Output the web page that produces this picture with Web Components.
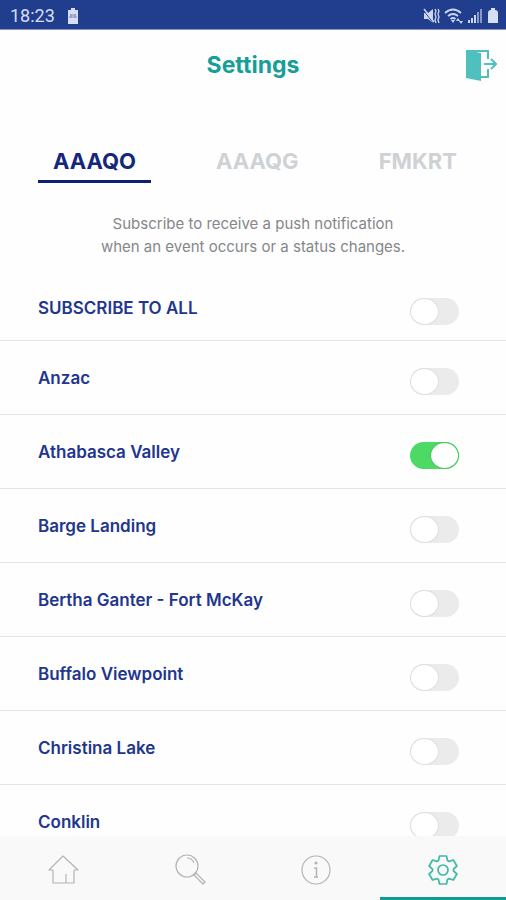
<!DOCTYPE html>
<html lang="en">
<head>
<meta charset="utf-8">
<meta name="viewport" content="width=device-width, initial-scale=1">
<title>Settings</title>
<style>
	body {
		margin: 0;
		background: #fefefe;
		font-family: Inter, "Liberation Sans", sans-serif;
	}
</style>
</head>
<body>
<settings-screen></settings-screen>

<script>
const statusTemplate = /*html*/`
<span class="side">
	<time>18:23</time>
	<svg width="12" height="18" viewBox="0 0 12 18" aria-hidden="true">
		<path d="M4 1h4v2h3v14H1V3h3z" fill="#d5def5"/>
		<path d="M3 8h6M2 10h8M4 7v4M8 7v4" stroke="#7f8dbd"/>
	</svg>
</span>
<span class="side icons">
	<svg width="17" height="18" viewBox="0 0 17 18" aria-hidden="true">
		<path d="M1 6h4l5-4v14l-5-4H1z" fill="#ccd6f0"/>
		<path d="M1 4l10 13" stroke="#213e8e"/>
		<path d="M1 2l10 13" stroke="#ccd6f0" stroke-width="1.5"/>
		<path d="M12 2l1 2-1 3 1 3-1 3 1 3M15 2l1 2-1 3 1 3-1 3 1 3" fill="none" stroke="#ccd6f0" stroke-width="1.3"/>
	</svg>
	<svg width="20" height="18" viewBox="0 0 20 18" aria-hidden="true">
		<path d="M1 6q8-7 16 0M4 9q5-4 10 0M6.5 12q2.5-2 5 0" fill="none" stroke="#ccd6f0" stroke-width="1.8"/>
		<path d="M7 13h4l-2 3zM12 14l2-3 2 3zM15 14h4l-2 3z" fill="#ccd6f0"/>
	</svg>
	<svg width="15" height="18" viewBox="0 0 15 18" aria-hidden="true">
		<path d="M0 13h2v3H0zM3 11h2v5H3zM6 8h2v8H6z" fill="#ccd6f0"/>
		<path d="M9 5h2v11H9zM12 2h2v14h-2z" fill="#8998c8"/>
	</svg>
	<svg width="12" height="18" viewBox="0 0 12 18" aria-hidden="true">
		<path d="M4 1h4v2q3 0 3 3v10H1V6q0-3 3-3z" fill="#d5def5"/>
	</svg>
</span>

<style>
	:host {
		display: flex;
		flex: none;
		justify-content: space-between;
		align-items: center;
		box-sizing: border-box;
		height: 30px;
		padding: 2px 7px 0 10px;
		background: #213e8e;
		border-bottom: 1px solid #8794c0;
		color: #d5def5;
	}

	.side {
		display: flex;
		align-items: center;
		gap: 12px;
	}

	.icons {
		gap: 4px;
	}

	time {
		font: 18px/20px Roboto, sans-serif;
	}

	svg {
		display: block;
	}
</style>
`;

class StatusBar extends HTMLElement {
	constructor() {
		super();
		this.attachShadow({ mode: "open" }).innerHTML = statusTemplate;
	}
}

const headerTemplate = /*html*/`
<h1><slot></slot></h1>
<button title="Log out" aria-label="Log out">
	<svg width="32" height="32" viewBox="0 0 32 32" aria-hidden="true">
		<path d="M1 1l15 3v28L1 29z" fill="#4fc0be"/>
		<path d="M1 2h22v8M23 20v8h-7" fill="none" stroke="#4fc0be" stroke-width="2"/>
		<path d="M19 15h11M26 10l5 5-5 5" fill="none" stroke="#4fc0be" stroke-width="2"/>
	</svg>
</button>

<style>
	:host {
		display: grid;
		flex: none;
		grid-template-columns: 1fr auto 1fr;
		align-items: center;
		height: 69px;
		padding: 0 9px;
	}

	h1 {
		grid-column: 2;
		margin: 0;
		font-size: 23px;
		line-height: 28px;
		font-weight: 700;
		color: #159f96;
	}

	button {
		justify-self: end;
		border: none;
		padding: 0;
		background: transparent;
	}

	svg {
		display: block;
	}
</style>
`;

class ScreenHeader extends HTMLElement {
	constructor() {
		super();
		this.attachShadow({ mode: "open" }).innerHTML = headerTemplate;
	}
}

const tabsStyle = /*html*/`
<style>
	:host {
		display: flex;
		flex: none;
		justify-content: space-between;
		margin-top: 43px;
		padding: 0 34px 0 38px;
	}

	button {
		border: none;
		border-bottom: 3px solid transparent;
		padding: 5px 15px;
		background: transparent;
		font: 700 22px/28px Inter, sans-serif;
		color: #cfd2d5;
	}

	button[aria-selected="true"] {
		border-color: #101f74;
		color: #14277c;
	}
</style>
`;

class TabBar extends HTMLElement {
	#shadow;
	constructor() {
		super();
		this.#shadow = this.attachShadow({ mode: "open" });
	}

	connectedCallback() {
		this.setAttribute('role', 'tablist');
		const names = this.getAttribute('tabs').split(' ');
		this.#shadow.innerHTML = tabsStyle + names.map((name, i) =>
			`<button role="tab" aria-selected="${i === 0}">${name}</button>`).join('');
		this.#shadow.addEventListener('click', (e) => this.#select(e.target.closest('button')));
	}

	#select(button) {
		if(!button)
			return;

		this.#shadow.querySelectorAll('button').forEach((b) => b.setAttribute('aria-selected', b === button));
	}
}

const rowTemplate = /*html*/`
<label for="toggle"><slot></slot></label>
<input id="toggle" type="checkbox" role="switch">

<style>
	:host {
		display: flex;
		justify-content: space-between;
		align-items: center;
		box-sizing: border-box;
		height: 74px;
		padding: 0 47px 0 38px;
		border-bottom: 1px solid #e3e4e6;
	}

	:host([compact]) {
		height: 66px;
	}

	label {
		font-size: 17px;
		line-height: 24px;
		font-weight: 600;
		color: #21368c;
	}

	input {
		appearance: none;
		display: flex;
		flex: none;
		align-items: center;
		box-sizing: border-box;
		width: 49px;
		height: 27px;
		margin: 8px 0 0;
		padding: 0 1px;
		border-radius: 14px;
		background: #ebebec;
	}

	input::before {
		content: "";
		width: 27px;
		height: 25px;
		border-radius: 50%;
		background: #fff;
		box-shadow: 0 0 0 1px #dededf;
	}

	input:checked {
		justify-content: flex-end;
		background: #4cd964;
	}

	input:checked::before {
		box-shadow: 0 0 0 1px #43c95a;
	}
</style>
`;

class SwitchRow extends HTMLElement {
	constructor() {
		super();
		this.attachShadow({ mode: "open" }).innerHTML = rowTemplate;
	}

	connectedCallback() {
		this.shadowRoot.querySelector('input').checked = this.hasAttribute('on');
	}
}

const navTemplate = /*html*/`
<a href="#home" aria-label="Home">
	<svg width="32" height="32" viewBox="0 0 32 32">
		<path d="M6 16v13h21V16M6 16H2L16 2l15 14h-4M19 29v-9"/>
	</svg>
</a>
<a href="#search" aria-label="Search">
	<svg width="32" height="32" viewBox="0 0 32 32">
		<circle cx="13" cy="12" r="11"/>
		<path d="M13 4q5 0 7 5M20 21l2-2 9 9-2 2zM20 20l1-1"/>
	</svg>
</a>
<a href="#info" aria-label="Information">
	<svg width="32" height="32" viewBox="0 0 32 32">
		<circle cx="16" cy="16" r="14"/>
		<circle cx="16" cy="9" r="1" fill="#a0a0a0"/>
		<path d="M14 14h2.5v9M14 23h4" stroke-width="1.5"/>
	</svg>
</a>
<a href="#settings" aria-label="Settings" aria-current="page">
	<svg width="32" height="32" viewBox="0 0 32 32">
		<path d="M12.5 2h7l1 4.500L22 7.400 26.400 6l3.500 6-3.400 3.100v1.800l3.400 3.100-3.500 6-4.400-1.400-1.500.9-1 4.500h-7l-1-4.500-1.500-.9L5.600 26l-3.500-6 3.400-3.100v-1.800L2.100 12l3.500-6L10 7.400l1.500-.9z"/>
		<circle cx="16" cy="16" r="5"/>
	</svg>
</a>

<style>
	:host {
		display: grid;
		flex: none;
		grid-template-columns: repeat(4, 1fr);
		height: 64px;
		background: #f9f9f9;
	}

	a {
		display: flex;
		align-items: center;
		justify-content: center;
		border-bottom: 3px solid transparent;
		padding-top: 6px;
		color: #b4b4b4;
	}

	a[aria-current] {
		border-color: #119b91;
		color: #3fb9a9;
	}

	svg {
		fill: none;
		stroke: currentColor;
		stroke-width: 1.2;
		stroke-linejoin: round;
	}

	a[aria-current] svg {
		stroke-width: 1.7;
	}
</style>
`;

class BottomNav extends HTMLElement {
	constructor() {
		super();
		this.attachShadow({ mode: "open" }).innerHTML = navTemplate;
	}
}

const screenTemplate = /*html*/`
<status-bar></status-bar>
<screen-header>Settings</screen-header>
<tab-bar tabs="AAAQO AAAQG FMKRT"></tab-bar>
<p>Subscribe to receive a push notification<br>when an event occurs or a status changes.</p>
<main>
	<switch-row compact>SUBSCRIBE TO ALL</switch-row>
	<switch-row>Anzac</switch-row>
	<switch-row on>Athabasca Valley</switch-row>
	<switch-row>Barge Landing</switch-row>
	<switch-row>Bertha Ganter - Fort McKay</switch-row>
	<switch-row>Buffalo Viewpoint</switch-row>
	<switch-row>Christina Lake</switch-row>
	<switch-row>Conklin</switch-row>
</main>
<bottom-nav></bottom-nav>

<style>
	:host {
		display: flex;
		flex-direction: column;
		height: 100vh;
	}

	p {
		flex: none;
		margin: 29px 0 17px;
		font-size: 15px;
		line-height: 23px;
		text-align: center;
		color: #85878a;
	}

	main {
		flex: 1;
		min-height: 0;
		overflow-y: auto;
		scrollbar-width: none;
	}
</style>
`;

class SettingsScreen extends HTMLElement {
	constructor() {
		super();
		this.attachShadow({ mode: "open" }).innerHTML = screenTemplate;
	}
}

customElements.define("status-bar", StatusBar);
customElements.define("screen-header", ScreenHeader);
customElements.define("tab-bar", TabBar);
customElements.define("switch-row", SwitchRow);
customElements.define("bottom-nav", BottomNav);
customElements.define("settings-screen", SettingsScreen);
</script>
</body>
</html>
